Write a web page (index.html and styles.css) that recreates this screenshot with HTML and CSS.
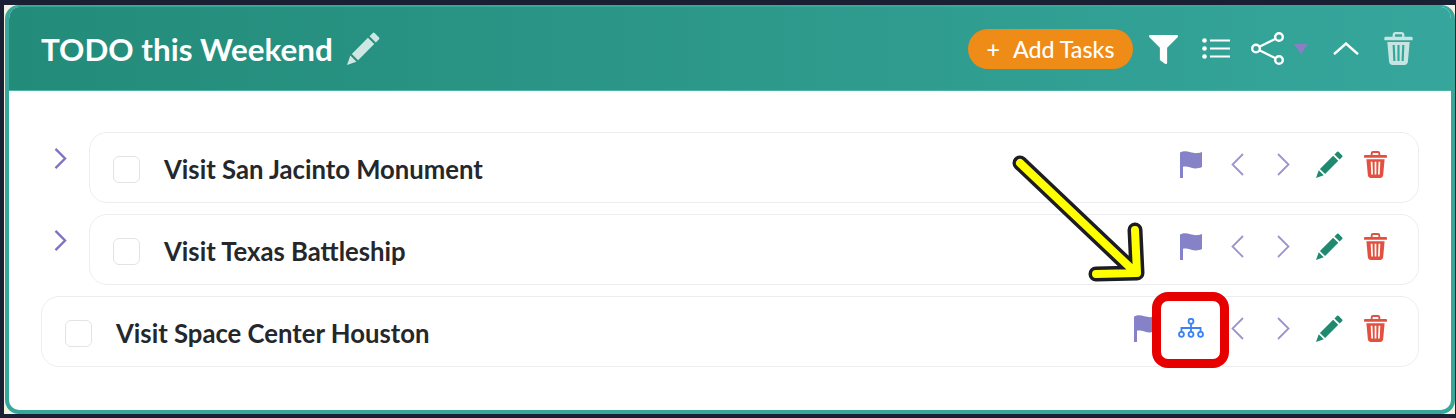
FILE: index.html
```html
<!DOCTYPE html>
<html lang="en">

<head>
    <meta charset="UTF-8">
    <meta name="viewport" content="width=device-width, initial-scale=1.0">
    <title>TODO this Weekend</title>
    <link rel="stylesheet" href="styles.css">
</head>

<body>
    <svg class="sprites" width="0" height="0">
        <symbol id="i-pencil" viewBox="0 0 512 512">
            <path fill="currentColor" d="M400 15q14-14 28 0l69 69q14 14 0 28l-50 50-97-97zM325 90l97 97-250 250-97-97zM52 365l95 95L0 512z" />
        </symbol>
        <symbol id="i-trash" viewBox="0 0 24 28">
            <path fill="none" stroke="currentColor" stroke-width="2" d="M8 5V2.500C8 1.700 8.700 1 9.500 1h5c.8 0 1.500.7 1.500 1.500V5" />
            <path fill="currentColor" d="M1 4h22a1 1 0 0 1 1 1v1.500a.5.5 0 0 1-.5.5H.5a.5.5 0 0 1-.5-.5V5a1 1 0 0 1 1-1z" />
            <path fill="currentColor" fill-rule="evenodd" d="M2.500 8.500h19L20 25c-.1 1.700-1.400 3-3 3H7c-1.600 0-2.900-1.300-3-3zM7 11l.6 13.500h1.800L8.800 11zM11.100 11v13.500h1.800V11zM15.200 11l-.6 13.500h1.800L17 11z" />
        </symbol>
        <symbol id="i-flag" viewBox="0 0 22 27">
            <path fill="currentColor" d="M0 1.500C4-.5 7 .2 10.500 1.300c3.500 1 7 1.400 11.500-.3v15c-4.500 2-8 1.500-11.500.5C7 15.500 5 15.200 3 15.800V27H0z" />
        </symbol>
        <symbol id="i-prev" viewBox="0 0 13 23">
            <path fill="none" stroke="currentColor" d="M12 1L1.500 11.500 12 22" />
        </symbol>
        <symbol id="i-next" viewBox="0 0 13 23">
            <path fill="none" stroke="currentColor" d="M1 1l10.500 10.500L1 22" />
        </symbol>
    </svg>

    <div class="frame">
        <div class="card">
            <div class="card-header">
                <h1 class="card-title">TODO this Weekend</h1>
                <svg class="title-edit"><use href="#i-pencil" /></svg>
                <div class="header-tools">
                    <button class="add-btn"><span class="add-plus">+</span>Add Tasks</button>
                    <svg class="tool-filter" viewBox="0 0 512 512">
                        <path fill="currentColor" d="M487.976 0H24.028C2.71 0-8.047 25.866 7.058 40.971L192 225.941V432c0 7.831 3.821 15.17 10.237 19.662l80 55.98C298.02 518.69 320 507.493 320 487.98V225.941l184.947-184.97C520.021 25.896 509.338 0 487.976 0z" />
                    </svg>
                    <svg class="tool-list" viewBox="0 0 28 21">
                        <circle cx="2.500" cy="2.500" r="2.300" fill="currentColor" />
                        <circle cx="2.500" cy="10.500" r="2.300" fill="currentColor" />
                        <circle cx="2.500" cy="18.500" r="2.300" fill="currentColor" />
                        <path stroke="currentColor" stroke-width="2.200" d="M8 2.500h20M8 10.500h20M8 18.500h20" />
                    </svg>
                    <svg class="tool-share" viewBox="0 0 33 33">
                        <g fill="none" stroke="currentColor" stroke-width="2.400">
                            <circle cx="5" cy="16.500" r="3.800" />
                            <circle cx="28" cy="5" r="3.800" />
                            <circle cx="28" cy="28" r="3.800" />
                            <path d="M8.400 14.800L24.600 6.700M8.400 18.200l16.200 8.100" />
                        </g>
                    </svg>
                    <span class="tool-caret"></span>
                    <svg class="tool-collapse" viewBox="0 0 26 13">
                        <path fill="none" stroke="currentColor" stroke-width="2.400" d="M1 12.200L13 1.500l12 10.700" />
                    </svg>
                    <svg class="tool-trash"><use href="#i-trash" /></svg>
                </div>
            </div>

            <div class="task-list">
                <div class="task-line">
                    <svg class="expander"><use href="#i-next" /></svg>
                    <div class="task">
                        <span class="check"></span>
                        <span class="task-name">Visit San Jacinto Monument</span>
                        <div class="task-tools">
                            <span class="tool"><svg class="flag"><use href="#i-flag" /></svg></span>
                            <span class="tool"><svg class="chev"><use href="#i-prev" /></svg></span>
                            <span class="tool"><svg class="chev"><use href="#i-next" /></svg></span>
                            <span class="tool"><svg class="edit"><use href="#i-pencil" /></svg></span>
                            <span class="tool"><svg class="del"><use href="#i-trash" /></svg></span>
                        </div>
                    </div>
                </div>
                <div class="task-line">
                    <svg class="expander"><use href="#i-next" /></svg>
                    <div class="task">
                        <span class="check"></span>
                        <span class="task-name">Visit Texas Battleship</span>
                        <div class="task-tools">
                            <span class="tool"><svg class="flag"><use href="#i-flag" /></svg></span>
                            <span class="tool"><svg class="chev"><use href="#i-prev" /></svg></span>
                            <span class="tool"><svg class="chev"><use href="#i-next" /></svg></span>
                            <span class="tool"><svg class="edit"><use href="#i-pencil" /></svg></span>
                            <span class="tool"><svg class="del"><use href="#i-trash" /></svg></span>
                        </div>
                    </div>
                </div>
                <div class="task-line">
                    <div class="task">
                        <span class="check"></span>
                        <span class="task-name">Visit Space Center Houston</span>
                        <div class="task-tools">
                            <span class="tool"><svg class="flag"><use href="#i-flag" /></svg></span>
                            <span class="tool">
                                <svg class="org" viewBox="0 0 28 22">
                                    <g fill="none" stroke="currentColor" stroke-width="2">
                                        <circle cx="14" cy="3.500" r="2.700" />
                                        <circle cx="3.500" cy="18" r="2.700" />
                                        <circle cx="14" cy="18" r="2.700" />
                                        <circle cx="24.500" cy="18" r="2.700" />
                                        <path d="M14 6.200v9M3.500 15.300v-4.300h21v4.300" />
                                    </g>
                                </svg>
                            </span>
                            <span class="tool"><svg class="chev"><use href="#i-prev" /></svg></span>
                            <span class="tool"><svg class="chev"><use href="#i-next" /></svg></span>
                            <span class="tool"><svg class="edit"><use href="#i-pencil" /></svg></span>
                            <span class="tool"><svg class="del"><use href="#i-trash" /></svg></span>
                        </div>
                    </div>
                </div>
            </div>
        </div>
    </div>

    <!-- annotations on top of the screenshot -->
    <svg class="callout-arrow" viewBox="0 0 140 130">
        <g fill="none" stroke-linecap="round" stroke-linejoin="round">
            <path stroke="#1c1c24" stroke-width="15" d="M10 11L126 121M125 78l2 43-41 1" />
            <path stroke="#ffff00" stroke-width="8" d="M10 11L126 121M125 78l2 43-41 1" />
        </g>
    </svg>
    <div class="callout-box"></div>
</body>

</html>
```

FILE: styles.css
```css
* {
    box-sizing: border-box;
}

body {
    margin: 0;
    height: 418px;
    padding: 5px 1px 4px 4px;
    background-color: #1a2033;
    font-family: "Lato", sans-serif;
    overflow: hidden;
}

.sprites {
    position: absolute;
}

.frame {
    height: 409px;
    background-color: #f4f0e2;
}

.card {
    height: 100%;
    margin-left: 1px;
    border: 4px solid #37a79c;
    border-top-width: 2px;
    border-radius: 14px;
    background-color: #fff;
    overflow: hidden;
}

.card-header {
    display: flex;
    align-items: center;
    height: 84px;
    padding: 0 38px 0 32px;
    border-bottom: 1px solid #4cb3a8;
    background: linear-gradient(90deg, #238b79, #36a69c);
    color: #fff;
}

.card-title {
    margin: 0;
    font-size: 31.4px;
    font-weight: 700;
}

.title-edit {
    width: 33px;
    height: 33px;
    margin-left: 14px;
    color: #cfe7e3;
}

.header-tools {
    display: flex;
    align-items: center;
    margin-left: auto;
}

.add-btn {
    width: 165px;
    height: 40px;
    border: 0;
    border-radius: 20px;
    background-color: #ef8b17;
    color: #fff;
    font-family: "Lato", sans-serif;
    font-size: 23.2px;
    font-weight: 500;
    white-space: nowrap;
}

.add-plus {
    margin-right: 13px;
}

.tool-filter {
    width: 29px;
    height: 29px;
    margin: 2px 0 0 16px;
}

.tool-list {
    width: 28px;
    height: 21px;
    margin-left: 24px;
}

.tool-share {
    width: 33px;
    height: 33px;
    margin-left: 21px;
}

.tool-caret {
    width: 0;
    height: 0;
    margin-left: 10px;
    border-left: 7px solid transparent;
    border-right: 7px solid transparent;
    border-top: 10px solid #8a7fc4;
}

.tool-collapse {
    width: 26px;
    height: 13px;
    margin-left: 25px;
}

.tool-trash {
    width: 29px;
    height: 33px;
    margin-left: 25px;
    color: #c5e4e2;
}

.task-list {
    padding: 41px 32px 0 32px;
}

.task-line {
    display: flex;
    align-items: flex-start;
    margin-bottom: 11px;
}

.expander {
    flex: none;
    width: 13px;
    height: 21px;
    margin: 16px 22px 0 13px;
    color: #7d75bd;
    stroke-width: 2.600;
}

.task {
    flex: 1;
    display: flex;
    align-items: center;
    height: 71px;
    padding: 0 20px 0 23px;
    border: 1px solid #ebedf0;
    border-radius: 18px;
    background-color: #fff;
}

.check {
    flex: none;
    width: 27px;
    height: 27px;
    margin: 3px 24px 0 0;
    border: 1px solid #e3e3e3;
    border-radius: 6px;
}

.task-name {
    padding-top: 2px;
    color: #25272b;
    font-size: 25.7px;
    font-weight: 700;
}

.task-tools {
    display: flex;
    align-items: center;
    margin: -7px 0 0 auto;
}

.tool {
    display: flex;
    align-items: center;
    justify-content: center;
    width: 46px;
    height: 30px;
}

.flag {
    width: 22px;
    height: 27px;
    color: #8682c8;
}

.chev {
    width: 13px;
    height: 23px;
    color: #9a94cf;
    stroke-width: 1.800;
}

.edit {
    width: 27px;
    height: 27px;
    color: #1f8a70;
}

.del {
    width: 23px;
    height: 27px;
    color: #e4503f;
}

.org {
    width: 26px;
    height: 20px;
    color: #3b82f6;
}

.callout-arrow {
    position: absolute;
    left: 1010px;
    top: 152px;
    width: 140px;
    height: 130px;
}

.callout-box {
    position: absolute;
    left: 1152px;
    top: 292px;
    width: 77px;
    height: 76px;
    border: 9px solid #e60000;
    border-radius: 16px;
}
```
